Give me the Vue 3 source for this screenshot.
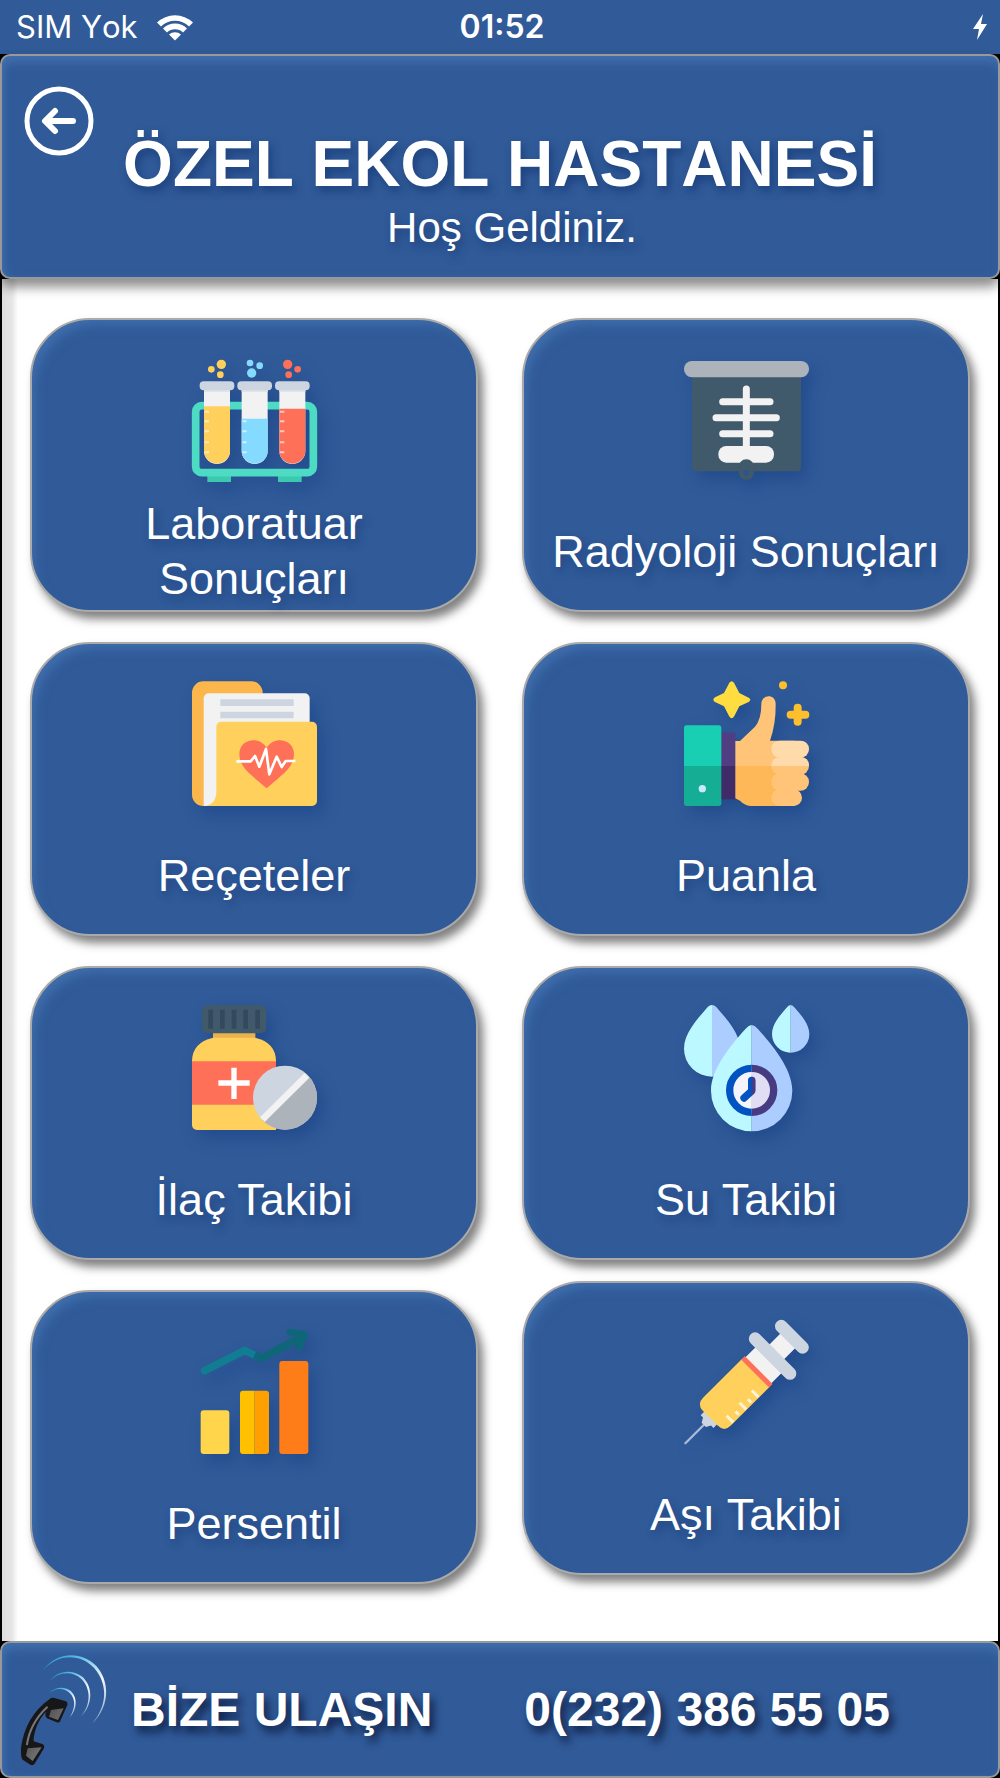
<template>
  <div class="app-screen">
    <!-- Status bar -->
    <div class="status-bar">
      <div class="status-left">
        <span>SIM Yok</span>
        <svg class="wifi" viewBox="0 0 38 28" aria-hidden="true">
          <path d="M1 9.500 A26 26 0 0 1 37 9.500 L33 13.500 A20 20 0 0 0 5 13.500 Z" />
          <path d="M7 15.500 A17 17 0 0 1 31 15.500 L27 19.500 A11.500 11.500 0 0 0 11 19.500 Z" />
          <path d="M13 21.500 A9 9 0 0 1 25 21.500 L19 27.500 Z" />
        </svg>
      </div>
      <span class="clock">01:52</span>
      <div class="status-right">
        <svg class="bolt" viewBox="0 0 16 26" aria-hidden="true">
          <path d="M11 0 L1 15 H7 L5 26 L15 10 H9 Z" />
        </svg>
      </div>
    </div>

    <!-- Header -->
    <header class="panel header">
      <button class="back" type="button" aria-label="Geri">
        <svg viewBox="0 0 70 70" aria-hidden="true">
          <circle cx="35" cy="35" r="32" />
          <path class="arrow" d="M49 35 H23 M31 25 L21 35 L31 45" />
        </svg>
      </button>
      <div class="titles">
        <h1>ÖZEL EKOL HASTANESİ</h1>
        <p>Hoş Geldiniz.</p>
      </div>
    </header>

    <!-- Menu -->
    <main class="menu">
      <div class="column" v-for="(column, index) in columns" :key="index">
        <button class="card" type="button" v-for="item in column" :key="item.icon" :class="item.icon">
          <svg v-if="item.icon === 'lab'" class="icon" viewBox="60 51 375 375" aria-hidden="true">
            <path fill="#3cc9b0" d="M106 400h71v26h-71zM318 400h71v26h-71z" />
            <rect x="71" y="197" width="353" height="201" rx="18" fill="none" stroke="#4ddbc4" stroke-width="23" />
            <g v-for="tube in tubes" :key="tube.x" :transform="`translate(${tube.x} 0)`">
              <path fill="#f2f2f2" d="M-39 140h78v193a39 39 0 0 1-78 0z" />
              <path fill="#dfe3ea" d="M-39 148h78v8h-78z" />
              <path :fill="tube.color" :d="`M-39 ${tube.level}H39V332a39 39 0 0 1-78 0z`" />
              <path stroke="#fff" stroke-opacity=".6" stroke-width="6" :d="tube.ticks" />
              <rect x="-52" y="124" width="104" height="27" rx="12" fill="#cdd5e0" />
            </g>
            <g fill="#ffd05c"><circle cx="148" cy="73" r="14" /><circle cx="118" cy="88" r="10" /><circle cx="145" cy="104" r="10" /></g>
            <g fill="#84dbff"><circle cx="234" cy="69" r="10" /><circle cx="263" cy="77" r="10" /><circle cx="239" cy="99" r="14" /></g>
            <g fill="#ff7058"><circle cx="347" cy="73" r="14" /><circle cx="377" cy="88" r="10" /><circle cx="350" cy="104" r="10" /></g>
          </svg>

          <svg v-else-if="item.icon === 'xray'" class="icon" viewBox="548 171 375 375" aria-hidden="true">
            <rect x="572" y="210" width="327" height="304" rx="12" fill="#40596b" />
            <rect x="548" y="183" width="375" height="49" rx="24" fill="#acb3ba" />
            <path fill="none" stroke="#f2f2f2" stroke-width="21" stroke-linecap="round" d="M735 267V455M664 305H806M644 353H825M664 401H806" />
            <rect x="651" y="438" width="167" height="50" rx="24" fill="#f2f2f2" />
            <circle cx="735" cy="502" r="24" fill="#40596b" />
            <circle cx="735" cy="517" r="16" fill="none" stroke="#40596b" stroke-width="14" />
            <circle cx="735" cy="518" r="8" fill="#2c5590" />
          </svg>

          <svg v-else-if="item.icon === 'folder'" class="icon" viewBox="60 62 375 375" aria-hidden="true">
            <path fill="#fbb64c" d="M94 63H238A34 34 0 0 1 272 97V437H94A34 34 0 0 1 60 403V97A34 34 0 0 1 94 63Z" />
            <path fill="#f2f2f2" d="M110 99H398A15 15 0 0 1 413 114V300L135 437H95V114A15 15 0 0 1 110 99Z" />
            <path fill="#cdd6e0" d="M145 117h220v20H145zM145 154h220v20H145z" />
            <path fill="#ffd05c" d="M148 184H420A15 15 0 0 1 435 199V422A15 15 0 0 1 420 437H98Q132 432 133 395V199A15 15 0 0 1 148 184Z" />
            <path fill="#ff7058" d="M284 384C240 345 202 322 202 281C202 235 262 225 284 262C306 225 366 235 366 281C366 322 328 345 284 384Z" />
            <path fill="none" stroke="#fff" stroke-width="8" stroke-linejoin="round" d="M193 303H236L249 287L262 319L282 266L292 342L314 289L329 320L341 302H370" />
          </svg>

          <svg v-else-if="item.icon === 'thumb'" class="icon" viewBox="68 62 375 375" aria-hidden="true">
            <path fill="#513e82" d="M170 217h52v100h-52z" />
            <path fill="#3f2b67" d="M170 317h52v100h-52z" />
            <path fill="#18cfb4" d="M68 203a8 8 0 0 1 8-8H172a8 8 0 0 1 8 8V317H68z" />
            <path fill="#15ae95" d="M68 317H180V429a8 8 0 0 1-8 8H76a8 8 0 0 1-8-8z" />
            <circle cx="123" cy="385" r="11" fill="#cae8fb" />
            <path fill="#ffc477" d="M222 242H236L281 199Q300 178 300 132C300 100 343 100 343 130Q344 190 326 241H400V317H222Z" />
            <path fill="#ffb857" d="M222 317H400V437H268Q248 434 236 421L222 414Z" />
            <rect x="330" y="387" width="92" height="50" rx="25" fill="#ffc477" />
            <rect x="330" y="339" width="113" height="52" rx="26" fill="#ffc477" />
            <rect x="330" y="289" width="113" height="54" rx="26" fill="#ffc477" />
            <path fill="#ffdaaa" d="M330 317Q330 291 356 291H417Q443 291 443 317Z" />
            <rect x="330" y="241" width="113" height="51" rx="25" fill="#ffdaaa" />
            <path fill="#ffdc40" d="M204 67Q211 58 218 67L234 98L262 112Q272 118 262 125L234 138L219 167Q211 180 203 167L188 138L161 125Q151 118 161 111L188 98Z" />
            <circle cx="365" cy="75" r="12" fill="#fdbf2e" />
            <path fill="none" stroke="#fdbf2e" stroke-width="24" stroke-linecap="round" d="M409 142V184M388 163H432" />
          </svg>

          <svg v-else-if="item.icon === 'pills'" class="icon" viewBox="60 45 375 375" aria-hidden="true">
            <path fill="#eab14d" d="M123 122h127v30H123z" />
            <path fill="#ffd05c" d="M60 214Q60 158 123 143H250Q312 158 312 214V420H75A15 15 0 0 1 60 405Z" />
            <path fill="#ff7058" d="M60 214h252v130H60z" />
            <path fill="none" stroke="#fff" stroke-width="16" d="M186 233V327M139 279H233" />
            <rect x="90" y="46" width="193" height="84" rx="18" fill="#40596b" />
            <path fill="none" stroke="#334a5e" stroke-width="14" d="M116 59V116M151 59V116M186 59V116M221 59V116M257 59V116" />
            <circle cx="339" cy="323" r="96" fill="#cdd6e0" />
            <path fill="#acb3ba" d="M407 255A96 96 0 0 1 271 391Z" />
            <path fill="none" stroke="#f2f2f2" stroke-width="20" d="M271 389L405 256" />
          </svg>

          <svg v-else-if="item.icon === 'water'" class="icon" viewBox="68 72 375 375" aria-hidden="true">
            <path fill="#bbf8ff" d="M152 72Q143 72 134 84C105 118 68 158 68 203A84 84 0 0 0 152 287Z" />
            <path fill="#accdff" d="M152 72Q161 72 170 84C199 118 236 158 236 203A84 84 0 0 1 152 287Z" />
            <path fill="#bbf8ff" d="M388 72Q382 72 375 81C355 104 332 130 332 159A56 56 0 0 0 388 215Z" />
            <path fill="#accdff" d="M388 72Q394 72 401 81C421 104 444 130 444 159A56 56 0 0 1 388 215Z" />
            <path fill="#bbf8ff" d="M271 132Q262 132 253 143C210 191 149 263 149 329A122 122 0 0 0 271 451Z" />
            <path fill="#accdff" d="M271 132Q280 132 289 143C332 191 393 263 393 329A122 122 0 0 1 271 451Z" />
            <path fill="#f4f5fa" d="M271 262A66 66 0 0 0 271 394Z" />
            <path fill="#e1ddf3" d="M271 262A66 66 0 0 1 271 394Z" />
            <path fill="none" stroke="#0053c0" stroke-width="22" d="M271 262A66 66 0 0 0 271 394" />
            <path fill="none" stroke="#473c82" stroke-width="22" d="M271 262A66 66 0 0 1 271 394" />
            <path fill="none" stroke="#0053c0" stroke-width="22" stroke-linecap="round" stroke-linejoin="round" d="M271 298V330L248 351" />
            <path fill="#473c82" d="M271 287A11 11 0 0 1 282 298V328Q282 335 271 344Z" />
          </svg>

          <svg v-else-if="item.icon === 'chart'" class="icon" viewBox="60 57 375 375" aria-hidden="true">
            <rect x="86" y="301" width="86" height="131" rx="9" fill="#ffd54b" />
            <path fill="#ffc000" d="M213 242H248V432H213A9 9 0 0 1 204 423V251A9 9 0 0 1 213 242Z" />
            <path fill="#ff9f00" d="M248 242H282A9 9 0 0 1 291 251V423A9 9 0 0 1 282 432H248Z" />
            <rect x="322" y="153" width="87" height="279" rx="9" fill="#ff7d18" />
            <path fill="none" stroke="#107d93" stroke-width="23" stroke-linecap="round" stroke-linejoin="round" d="M98 182L218 121L250 137" />
            <path fill="none" stroke="#0f6679" stroke-width="23" stroke-linejoin="round" d="M248 135L268 145L380 86" />
            <path fill="none" stroke="#0f6679" stroke-width="20" stroke-linecap="round" stroke-linejoin="round" d="M354 66L398 74L382 113" />
            <path fill="#0f6679" d="M354 66L398 74L382 113Z" />
          </svg>

          <svg v-else class="icon" viewBox="68 60 375 375" aria-hidden="true">
            <g transform="rotate(45 251 251)">
              <path fill="none" stroke="#a9bbd5" stroke-width="7" stroke-linecap="round" d="M251 420V504" />
              <path fill="#cdd6e0" d="M224 390H278V412H268L260 426H242L234 412H224Z" />
              <path fill="#f2f2f2" d="M220 60h62v70h-62zM196 134h110v62H196z" />
              <path fill="#ffd05c" d="M192 204H310V370Q310 398 282 398H220Q192 398 192 370Z" />
              <path fill="#ff7058" d="M192 193h118v15H192z" />
              <path fill="none" stroke="#cdd6e0" stroke-width="38" stroke-linecap="round" d="M206 52H296M177 134H325" />
              <path fill="none" stroke="#fff3d6" stroke-width="9" d="M280 251H308M290 278H304M280 303H308M290 330H304M280 358H308" />
            </g>
          </svg>

          <span class="label"><span>{{ item.label }}</span></span>
        </button>
      </div>
    </main>

    <!-- Contact -->
    <footer class="panel contact">
      <svg class="phone" viewBox="50 60 282 351" aria-hidden="true">
        <defs>
          <linearGradient id="wave" x1="0" y1="0" x2="1" y2="1">
            <stop offset="0" stop-color="#1f8fd0" />
            <stop offset=".3" stop-color="#5cbbe6" />
            <stop offset=".65" stop-color="#f2f9ff" />
            <stop offset="1" stop-color="#f2f9ff" stop-opacity=".4" />
          </linearGradient>
          <linearGradient id="shine" x1="0" y1="0" x2="1" y2="1">
            <stop offset="0" stop-color="#333" />
            <stop offset="1" stop-color="#999" />
          </linearGradient>
        </defs>
        <g fill="url(#wave)">
          <path d="M127 120C162 65 240 55 288 105C333 158 325 230 275 278C318 228 326 163 282 112C240 65 168 68 127 120Z" />
          <path d="M147 152C168 118 218 112 248 139C280 172 276 223 243 256C270 222 274 176 244 145C216 118 172 122 147 152Z" />
          <path d="M147 187C162 167 195 165 212 181C233 202 230 236 208 260C224 232 228 206 208 186C191 169 164 170 147 187Z" />
        </g>
        <path fill="#171719" d="M148 204Q153 199 162 201L197 211Q203 214 201 222L180 269Q177 277 169 274L140 262Q132 254 137 242Q117 262 107 292Q99 317 100 331L128 340Q134 344 131 352L103 398Q98 405 90 401L67 386Q61 380 62 350Q75 256 148 204Z" />
        <path fill="url(#shine)" d="M152 237L190 232L173 267L146 257ZM82 352L124 349L97 390L77 374Z" />
        <path fill="none" stroke="#77777a" stroke-width="6" stroke-linecap="round" d="M140 229Q90 276 80 340" />
      </svg>
      <strong class="contact-title">BİZE ULAŞIN</strong>
      <a class="contact-number" href="tel:02323865505">0(232) 386 55 05</a>
    </footer>
  </div>
</template>

<script setup>
const columns = [
  [
    { icon: 'lab', label: 'Laboratuar Sonuçları' },
    { icon: 'folder', label: 'Reçeteler' },
    { icon: 'pills', label: 'İlaç Takibi' },
    { icon: 'chart', label: 'Persentil' },
  ],
  [
    { icon: 'xray', label: 'Radyoloji Sonuçları' },
    { icon: 'thumb', label: 'Puanla' },
    { icon: 'water', label: 'Su Takibi' },
    { icon: 'syringe', label: 'Aşı Takibi' },
  ],
]

const tubes = [
  { x: 135, level: 199, color: '#ffd05c', ticks: 'M-37 215h13M-37 244h13M-37 274h13M-37 307h13M-37 337h13' },
  { x: 248, level: 236, color: '#84dbff', ticks: 'M-37 244h13M-37 274h13M-37 307h13M-37 337h13' },
  { x: 361, level: 206, color: '#ff7058', ticks: 'M-37 215h13M-37 244h13M-37 274h13M-37 307h13M-37 337h13' },
]
</script>

<style>
body {
  margin: 0;
  background: #000;
}
</style>

<style scoped>
.app-screen {
  display: flex;
  flex-direction: column;
  min-height: 100vh;
  font-family: "Liberation Sans", Arial, sans-serif;
  font-kerning: none;
  color: #fff;
}

/* Status bar */
.status-bar {
  display: grid;
  grid-template-columns: 1fr auto 1fr;
  align-items: center;
  height: 54px;
  padding: 0 12px 0 16px;
  background: #305a98;
  font-family: Inter, sans-serif;
  font-size: 31px;
  line-height: 40px;
}
.status-left {
  display: flex;
  align-items: center;
  gap: 18px;
}
.clock {
  font-size: 32px;
  font-weight: 600;
}
.status-right {
  display: flex;
  justify-content: flex-end;
}
.wifi {
  width: 38px;
  height: 28px;
  fill: #fff;
}
.bolt {
  width: 16px;
  height: 26px;
  fill: #fff;
}

/* Header and footer bars */
.panel {
  z-index: 1;
  border: 2px solid #999;
  border-radius: 10px;
  background: #305a98;
  box-shadow: inset 0 12px 12px -6px #416fae, inset 6px 0 10px -4px #416fae;
}
.header {
  display: grid;
  box-shadow: inset 0 12px 12px -6px #416fae, inset 6px 0 10px -4px #416fae, 0 8px 12px rgba(0, 0, 0, 0.45);
}
.back,
.titles {
  grid-area: 1 / 1;
}
.back {
  justify-self: start;
  align-self: start;
  z-index: 1;
  width: 70px;
  height: 70px;
  margin: 30px 0 0 22px;
  padding: 0;
  border: 0;
  background: none;
  cursor: pointer;
}
.back svg {
  display: block;
  fill: none;
  stroke: #fff;
  stroke-width: 5;
}
.back .arrow {
  stroke-width: 6;
  stroke-linecap: round;
  stroke-linejoin: round;
}
.titles {
  padding: 76px 0 24px;
  text-align: center;
  text-shadow: 3px 5px 8px rgba(10, 40, 100, 0.5);
}
.titles h1 {
  margin: 0;
  font-size: 64px;
  line-height: 64px;
}
.titles p {
  margin: 7px 0 0;
  padding-left: 24px;
  font-size: 42px;
  line-height: 50px;
}

/* Menu */
.menu {
  display: grid;
  grid-template-columns: 1fr 1fr;
  gap: 44px;
  flex: 1;
  margin: 0 2px;
  padding: 39px 28px 56px;
  background: linear-gradient(to right, #ddd, #e6e6e6 10px, #fff 16px);
}
.column {
  display: flex;
  flex-direction: column;
  gap: 30px;
}
.card {
  display: flex;
  flex-direction: column;
  align-items: center;
  gap: 14px;
  padding: 37px 20px 4px;
  border: 2px solid #aaa;
  border-radius: 60px;
  background: #305a98;
  box-shadow: inset 8px 10px 12px -6px #416fae, 5px 7px 10px rgba(0, 0, 0, 0.5);
  color: #fff;
  font-family: inherit;
  font-size: 45px;
  line-height: 55px;
  text-align: center;
  cursor: pointer;
}
.card.syringe {
  margin-top: -9px;
}
.icon {
  width: 125px;
  height: 125px;
  overflow: visible;
  filter: drop-shadow(6px 8px 8px rgba(10, 50, 120, 0.35));
}
.label {
  display: flex;
  align-items: center;
  min-height: 110px;
  text-shadow: 3px 5px 8px rgba(10, 40, 100, 0.4);
}

/* Contact */
.contact {
  display: flex;
  align-items: center;
  padding: 8px 15px;
  font-size: 48px;
  line-height: 56px;
  font-weight: bold;
  text-shadow: 4px 6px 8px rgba(0, 10, 40, 0.75);
}
.phone {
  width: 94px;
  height: 117px;
}
.contact-title {
  margin-left: 20px;
}
.contact-number {
  margin-left: 92px;
  color: inherit;
  text-decoration: none;
}
</style>
